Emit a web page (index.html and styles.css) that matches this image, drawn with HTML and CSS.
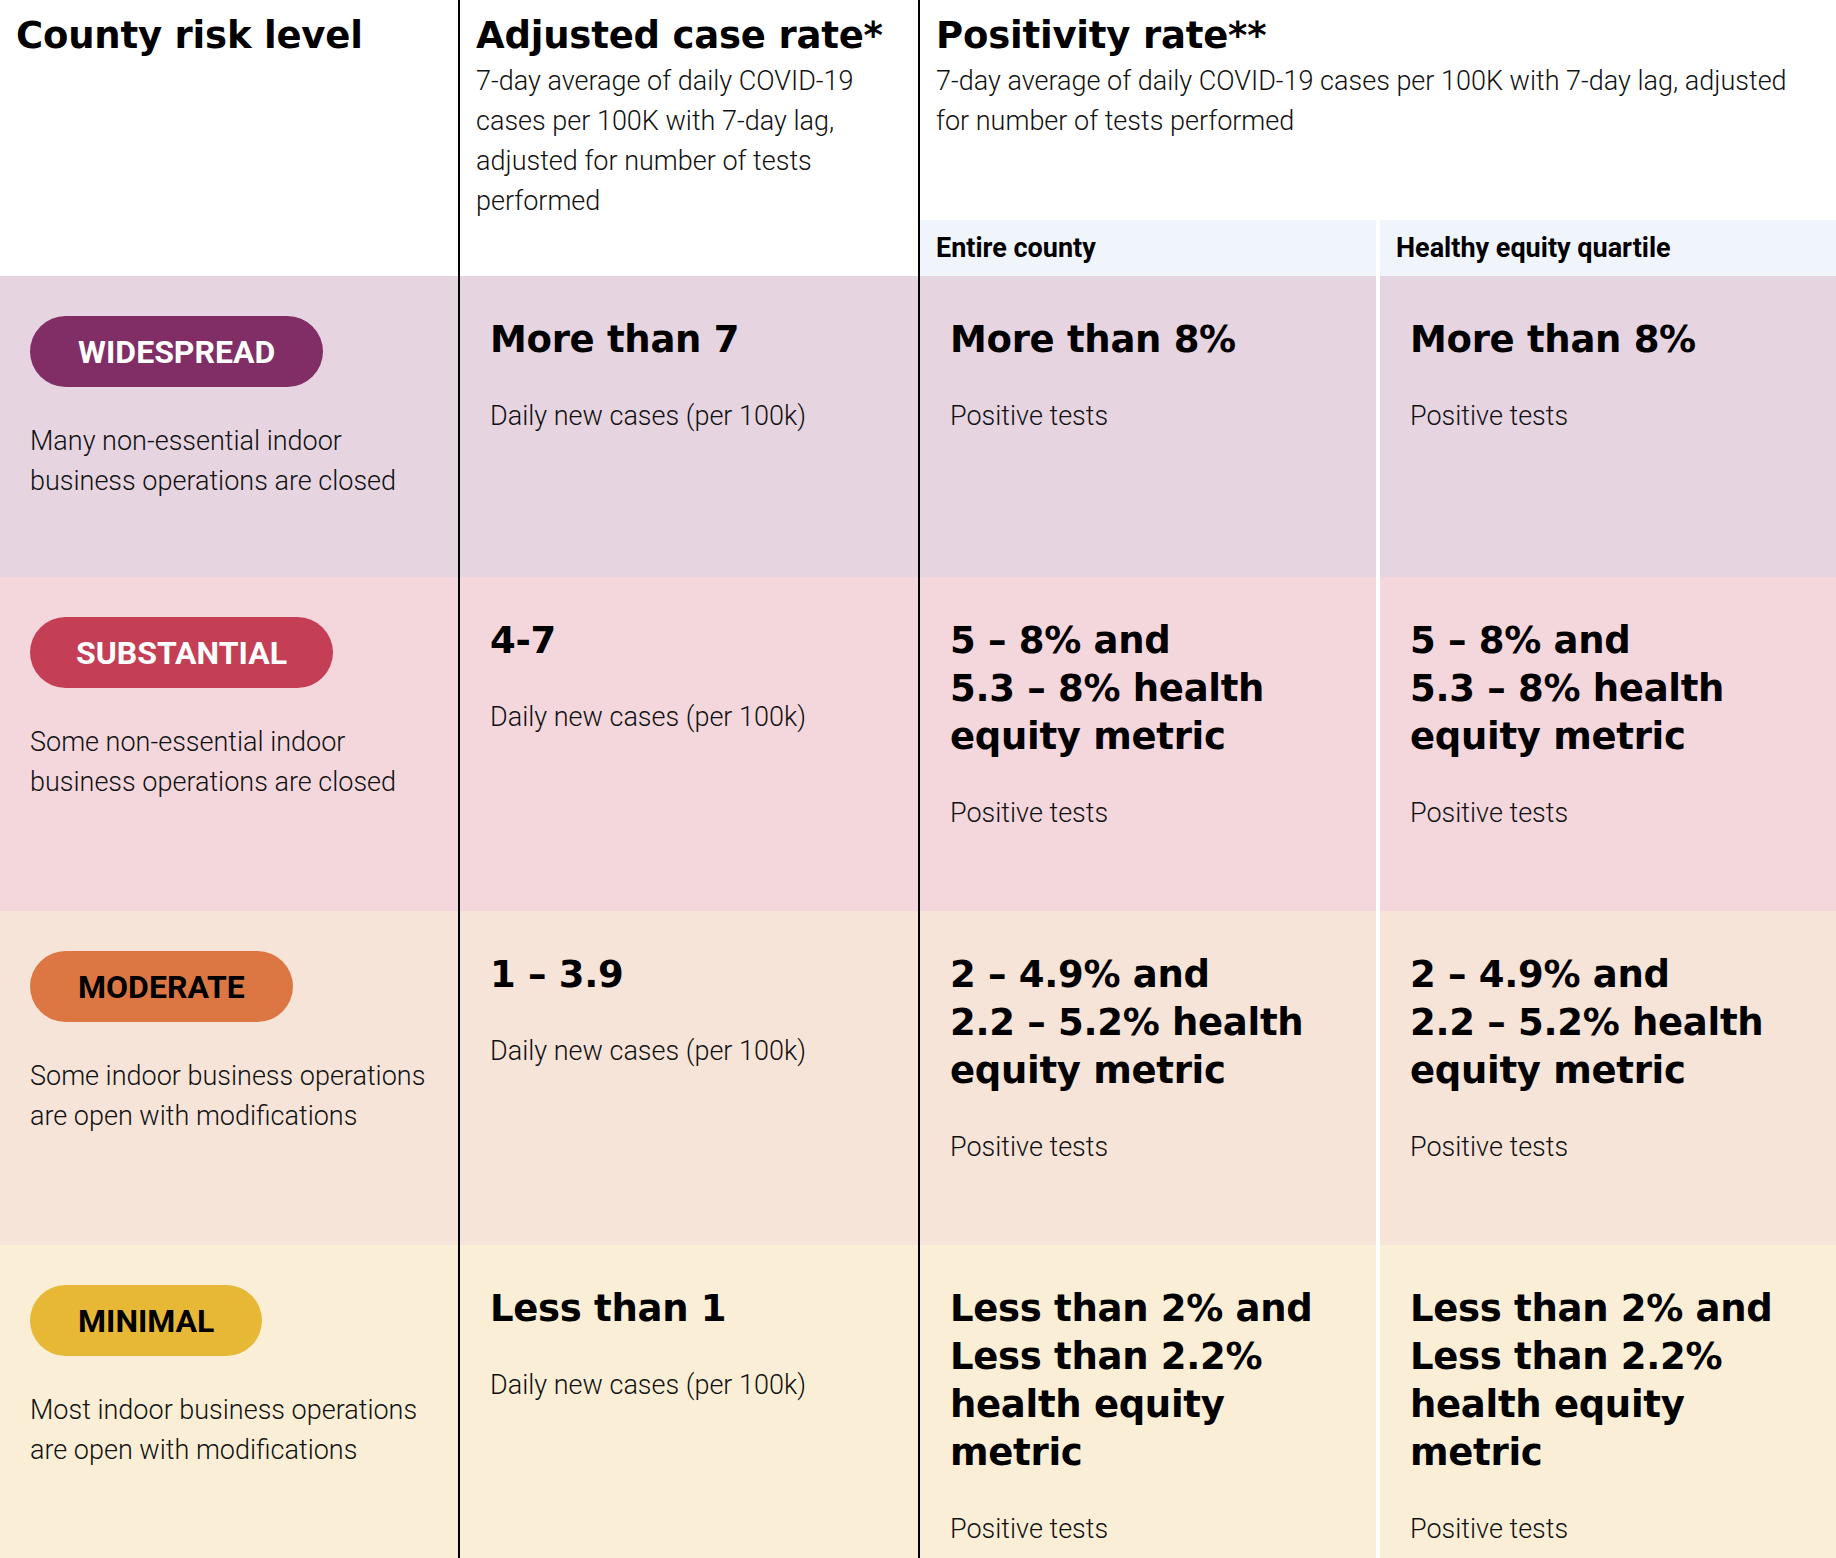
FILE: index.html
```html
<!DOCTYPE html>
<html lang="en">
<head>
<meta charset="utf-8">
<title>County risk level</title>
<link rel="stylesheet" href="styles.css">
</head>
<body>
<div class="grid">
  <div class="hcell hc-level">
    <h2 class="title">County risk level</h2>
  </div>
  <div class="hcell hc-case line">
    <h2 class="title">Adjusted case rate*</h2>
    <p class="sub">7-day average of daily COVID-19 cases per 100K with 7-day lag, adjusted for number of tests performed</p>
  </div>
  <div class="hcell hc-pos line">
    <h2 class="title">Positivity rate**</h2>
    <p class="sub">7-day average of daily COVID-19 cases per 100K with 7-day lag, adjusted for number of tests performed</p>
  </div>
  <div class="subhead line">Entire county</div>
  <div class="subhead gap">Healthy equity quartile</div>

  <div class="row widespread">
    <div class="cell first">
      <span class="badge">WIDESPREAD</span>
      <p class="desc">Many non-essential indoor business operations are closed</p>
    </div>
    <div class="cell line">
      <h3 class="value">More than 7</h3>
      <p class="note">Daily new cases (per 100k)</p>
    </div>
    <div class="cell line">
      <h3 class="value">More than 8%</h3>
      <p class="note">Positive tests</p>
    </div>
    <div class="cell gap">
      <h3 class="value">More than 8%</h3>
      <p class="note">Positive tests</p>
    </div>
  </div>

  <div class="row substantial">
    <div class="cell first">
      <span class="badge">SUBSTANTIAL</span>
      <p class="desc">Some non-essential indoor business operations are closed</p>
    </div>
    <div class="cell line">
      <h3 class="value">4-7</h3>
      <p class="note">Daily new cases (per 100k)</p>
    </div>
    <div class="cell line">
      <h3 class="value">5 – 8% and<br>5.3 – 8% health equity metric</h3>
      <p class="note">Positive tests</p>
    </div>
    <div class="cell gap">
      <h3 class="value">5 – 8% and<br>5.3 – 8% health equity metric</h3>
      <p class="note">Positive tests</p>
    </div>
  </div>

  <div class="row moderate">
    <div class="cell first">
      <span class="badge">MODERATE</span>
      <p class="desc">Some indoor business operations are open with modifications</p>
    </div>
    <div class="cell line">
      <h3 class="value">1 – 3.9</h3>
      <p class="note">Daily new cases (per 100k)</p>
    </div>
    <div class="cell line">
      <h3 class="value">2 – 4.9% and<br>2.2 – 5.2% health equity metric</h3>
      <p class="note">Positive tests</p>
    </div>
    <div class="cell gap">
      <h3 class="value">2 – 4.9% and<br>2.2 – 5.2% health equity metric</h3>
      <p class="note">Positive tests</p>
    </div>
  </div>

  <div class="row minimal">
    <div class="cell first">
      <span class="badge">MINIMAL</span>
      <p class="desc">Most indoor business operations are open with modifications</p>
    </div>
    <div class="cell line">
      <h3 class="value">Less than 1</h3>
      <p class="note">Daily new cases (per 100k)</p>
    </div>
    <div class="cell line">
      <h3 class="value">Less than 2% and<br>Less than 2.2% health equity metric</h3>
      <p class="note">Positive tests</p>
    </div>
    <div class="cell gap">
      <h3 class="value">Less than 2% and<br>Less than 2.2% health equity metric</h3>
      <p class="note">Positive tests</p>
    </div>
  </div>
</div>
</body>
</html>
```

FILE: styles.css
```css
html {
  overflow: hidden;
}

body {
  margin: 0;
  background: #ffffff;
  color: #111111;
  font-family: Roboto, "Liberation Sans", sans-serif;
}

.grid {
  display: grid;
  grid-template-columns: 458px 460px 458px 460px;
  grid-template-rows: 220px 56px;
  width: 1836px;
}

.line {
  border-left: 2px solid #000000;
}

.gap {
  border-left: 4px solid #ffffff;
}

/* header */
.hcell {
  padding: 12px 16px 0 16px;
  background: #ffffff;
}

.hc-level {
  grid-column: 1;
  grid-row: 1 / 3;
}

.hc-case {
  grid-column: 2;
  grid-row: 1 / 3;
}

.hc-pos {
  grid-column: 3 / 5;
  grid-row: 1;
}

.title {
  margin: 0;
  font-family: "DejaVu Sans", sans-serif;
  font-weight: 700;
  font-size: 37px;
  line-height: 48px;
  letter-spacing: -0.2px;
  color: #000000;
}

.sub {
  margin: 1px 0 0 0;
  font-size: 27px;
  font-weight: 300;
  line-height: 40px;
  color: #111111;
}

.subhead {
  grid-row: 2;
  display: flex;
  align-items: center;
  padding: 0 16px;
  background: #f0f4fb;
  font-size: 27px;
  font-weight: 700;
  color: #000000;
}

/* rows */
.row {
  display: contents;
}

.cell {
  padding: 40px 28px 78px 30px;
}

.cell.first {
  padding: 40px 18px 76px 30px;
}

.widespread .cell { background: #e6d4e1; }
.substantial .cell { background: #f4d7dd; }
.moderate .cell { background: #f6e4d9; }
.minimal .cell { background: #faefd6; }

.badge {
  display: inline-flex;
  align-items: center;
  height: 71px;
  padding: 0 48px;
  border-radius: 36px;
  font-size: 32px;
  font-weight: 700;
}

.substantial .badge {
  padding: 0 46px;
}

.widespread .badge { background: #802e65; color: #ffffff; }
.substantial .badge { background: #c43f55; color: #ffffff; }
.moderate .badge { background: #dc7743; color: #000000; }
.minimal .badge { background: #e7b836; color: #000000; }

.desc {
  margin: 34px 0 0 0;
  font-size: 27px;
  font-weight: 300;
  line-height: 40px;
}

.value {
  margin: 0;
  font-family: "DejaVu Sans", sans-serif;
  font-weight: 700;
  font-size: 37px;
  line-height: 48px;
  letter-spacing: -0.3px;
  color: #000000;
}

.note {
  margin: 32px 0 0 0;
  font-size: 27px;
  font-weight: 300;
  line-height: 40px;
}
```
